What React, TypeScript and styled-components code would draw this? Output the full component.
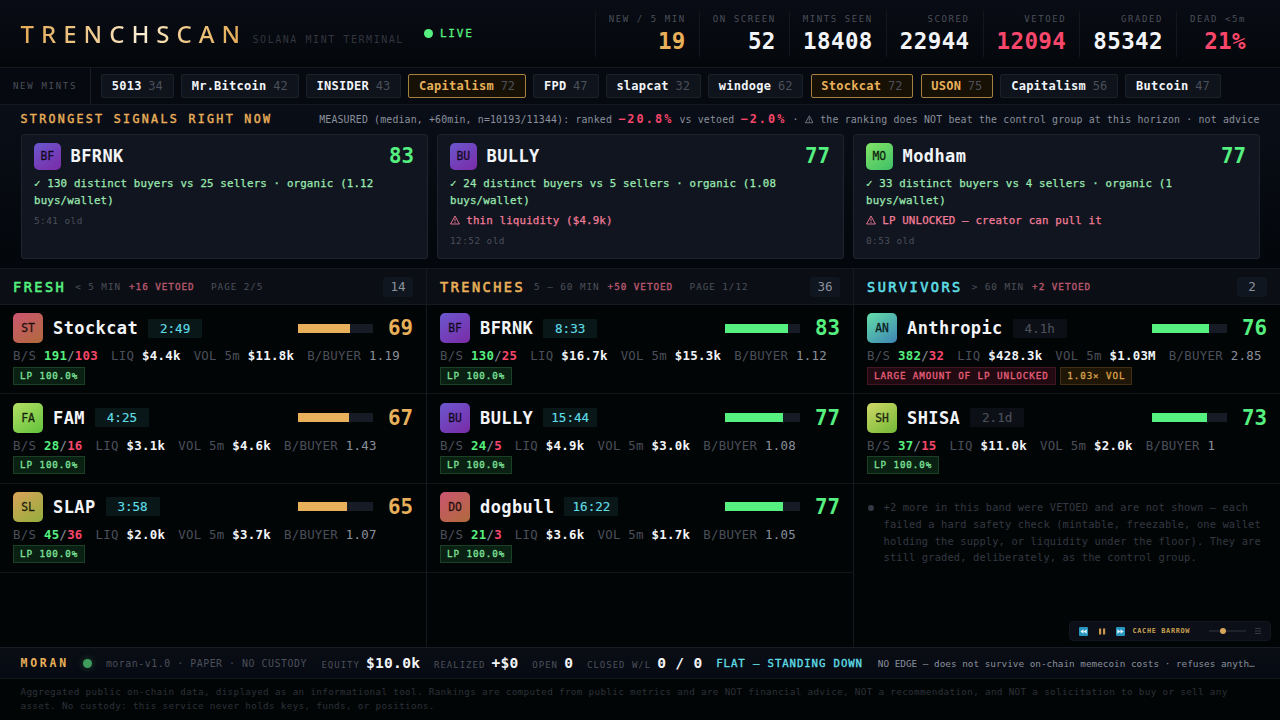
import React from 'react';
import styled, { createGlobalStyle } from 'styled-components';

const C = {
  amber: '#e8b05a',
  green: '#55f07f',
  red: '#f8476a',
  cyan: '#5fdde5',
  white: '#f2f4f8',
  grey: '#8a909c',
  dim: '#4b4f5a',
  faint: '#343842',
  line: '#15191f',
};

const Global = createGlobalStyle`
  * { box-sizing: border-box; }
  html, body { margin: 0; background: #020506; }
  body { overflow: hidden; font-family: "DejaVu Sans Mono", "Liberation Mono", monospace; color: ${C.white}; }
`;

const Screen = styled.div`
  width: 1280px;
  height: 720px;
  display: grid;
  grid-template-rows: 68px 37px 164px 378px 32px 41px;
  overflow: hidden;
  white-space: nowrap;
`;

/* ---------- header ---------- */

const Header = styled.header`
  display: flex;
  align-items: center;
  padding: 0 21px 0 20px;
  background: linear-gradient(180deg, #090c15, #04070a);
  border-bottom: 1px solid ${C.line};
`;

const Logo = styled.h1`
  margin: 0;
  padding-left: 0.5px;
  width: 232.5px;
  font: 500 24px/34px "Noto Sans", sans-serif;
  letter-spacing: 7px;
  background: linear-gradient(90deg, #e5ac57 0%, #f0cf97 35%, #fdf1d8 52%, #f0cb8b 70%, #e5ac57 95%);
  -webkit-background-clip: text;
  background-clip: text;
  color: transparent;
`;

const Tagline = styled.span`
  padding-top: 13px;
  font-size: 10px;
  line-height: 14px;
  letter-spacing: 1.55px;
  color: #32353f;
`;

const Live = styled.div`
  display: flex;
  align-items: center;
  gap: 7px;
  margin-left: 20px;
  font-size: 11px;
  line-height: 16px;
  letter-spacing: 1.8px;
  color: ${C.green};
  -webkit-text-stroke: 0.3px currentColor;
`;

const LiveDot = styled.i`
  width: 9px;
  height: 9px;
  border-radius: 50%;
  background: ${C.green};
`;

const Stats = styled.div`
  display: flex;
  margin-left: auto;
`;

const Stat = styled.div`
  height: 46px;
  padding: 0 13px;
  border-left: 1px solid #14171d;
  text-align: right;
`;

const StatLabel = styled.div`
  font-size: 9px;
  line-height: 17px;
  letter-spacing: 1.58px;
  color: ${C.dim};
`;

const StatValue = styled.div<{ $color: string }>`
  font-size: 22.5px;
  letter-spacing: 0.4px;
  line-height: 26px;
  font-weight: 700;
  color: ${p => p.$color};
`;

/* ---------- new mints ---------- */

const MintBar = styled.section`
  display: flex;
  align-items: stretch;
  background: #06090f;
  border-bottom: 1px solid ${C.line};
`;

const MintLabel = styled.div`
  width: 91px;
  padding-left: 13px;
  border-right: 1px solid #1a1d25;
  font-size: 9px;
  line-height: 37px;
  letter-spacing: 1.7px;
  color: ${C.dim};
`;

const Chips = styled.div`
  display: flex;
  align-items: center;
  gap: 7.15px;
  padding-left: 10px;
`;

const Chip = styled.div<{ $hot?: boolean }>`
  display: flex;
  align-items: center;
  gap: 6.7px;
  height: 24px;
  padding: 0 10px 0 9.7px;
  border: 1px solid ${p => (p.$hot ? '#a5813f' : '#1b212b')};
  border-radius: 2px;
  background: ${p => (p.$hot ? '#171105' : '#0e131c')};
  font-size: 12px;
  color: ${C.dim};
  b { letter-spacing: 0.27px; color: ${p => (p.$hot ? C.amber : C.white)}; }
`;

/* ---------- strongest signals ---------- */

const Signals = styled.section`
  padding: 0 20.5px 10px;
  background: linear-gradient(180deg, #0a0e18, #03060a);
  border-bottom: 1px solid ${C.line};
`;

const SignalsHead = styled.div`
  display: flex;
  justify-content: space-between;
  height: 28.5px;
  line-height: 28px;
`;

const SignalsTitle = styled.h2`
  margin: 0;
  font-size: 11.7px;
  line-height: 28px;
  letter-spacing: 2.29px;
  font-weight: 400;
  color: ${C.amber};
  -webkit-text-stroke: 0.4px currentColor;
`;

const Measured = styled.div`
  font-size: 9.9px;
  letter-spacing: 0.155px;
  color: ${C.grey};
  b {
    font-size: 11.8px;
    letter-spacing: 2.1px;
    color: ${C.red};
  }
`;

const CardGrid = styled.div`
  display: grid;
  grid-template-columns: repeat(3, 1fr);
  gap: 9px;
  height: 125px;
`;

const Card = styled.article`
  padding: 8.5px 12.5px;
  border: 1px solid #1e232e;
  border-radius: 3px;
  background: #111520;
`;

const TopLine = styled.div`
  display: flex;
  align-items: center;
`;

const Avatar = styled.div<{ $size: number; $from: string; $to: string }>`
  width: ${p => p.$size}px;
  height: ${p => p.$size}px;
  margin-right: 10px;
  border-radius: 5px;
  background: linear-gradient(145deg, ${p => p.$from}, ${p => p.$to});
  color: rgba(0, 0, 0, 0.78);
  font-size: 11.4px;
  line-height: ${p => p.$size + 0.5}px;
  text-align: center;
  -webkit-text-stroke: 0.35px currentColor;
`;

const TokenName = styled.span`
  font-size: 17px;
  line-height: 26px;
  letter-spacing: 0.4px;
  font-weight: 700;
`;

const Score = styled.span<{ $color: string }>`
  min-width: 30px;
  margin-left: auto;
  font-size: 20.8px;
  line-height: 26px;
  font-weight: 700;
  text-align: right;
  color: ${p => p.$color};
`;

const Reason = styled.p<{ $bad?: boolean }>`
  margin: ${p => (p.$bad ? 3.5 : 6.8)}px 0 0;
  font-size: 10.8px;
  letter-spacing: 0.155px;
  line-height: 16.8px;
  white-space: normal;
  color: ${p => (p.$bad ? '#f27d98' : '#9be8b0')};
  -webkit-text-stroke: 0.25px currentColor;
`;

const Mark = styled.span<{ $w: number }>`
  display: inline-block;
  width: ${p => p.$w}px;
  vertical-align: -1px;
  svg { display: block; }
`;

const Age = styled.div`
  margin-top: 3px;
  font-size: 9.3px;
  line-height: 15px;
  letter-spacing: 0.5px;
  color: ${C.dim};
`;

/* ---------- columns ---------- */

const Columns = styled.main`
  display: grid;
  grid-template-columns: repeat(3, 426px);
  gap: 1px;
  background: ${C.line};
`;

const Column = styled.section`
  background: #020506;
`;

const ColumnHead = styled.div`
  display: flex;
  align-items: center;
  height: 36px;
  padding: 0 13px;
  background: #0b0f15;
  border-bottom: 1px solid #161b21;
  font-size: 9.3px;
  letter-spacing: 0.95px;
  color: ${C.dim};
`;

const ColumnTitle = styled.h3<{ $color: string }>`
  margin: 0 9px 0 0;
  font-size: 13.6px;
  letter-spacing: 2.45px;
  font-weight: 400;
  color: ${p => p.$color};
  -webkit-text-stroke: 0.6px currentColor;
`;

const Vetoed = styled.span`
  margin: 0 16.5px 0 8px;
  color: #b9586f;
  -webkit-text-stroke: 0.35px currentColor;
`;

const Count = styled.span`
  width: 30px;
  height: 20px;
  margin-left: auto;
  border-radius: 3px;
  background: #10161f;
  font-size: 12.6px;
  line-height: 20px;
  letter-spacing: 0;
  text-align: center;
  color: ${C.grey};
`;

const Row = styled.article`
  height: 89.3px;
  padding: 8.4px 13px 0;
  border-bottom: 1px solid #11161a;
`;

const Timer = styled.span<{ $old?: boolean }>`
  width: 54px;
  height: 19px;
  margin-left: 10px;
  border-radius: 1px;
  background: ${p => (p.$old ? '#0c0f15' : '#0a1719')};
  font-size: 12.6px;
  line-height: 19px;
  text-align: center;
  color: ${p => (p.$old ? C.dim : C.cyan)};
  -webkit-text-stroke: 0.15px currentColor;
`;

const Meter = styled.div`
  width: 75px;
  height: 9px;
  margin-left: auto;
  margin-right: 9.6px;
  background: #171b26;
  & + span { margin-left: 0; }
`;

const MeterFill = styled.div<{ $color: string }>`
  height: 100%;
  background: ${p => p.$color};
`;

const Facts = styled.div`
  display: flex;
  gap: 13px;
  margin-top: 4px;
  font-size: 12.4px;
  letter-spacing: 0.27px;
  line-height: 17px;
  color: ${C.dim};
  b { color: ${C.white}; }
  em { font-style: normal; color: ${C.grey}; }
`;

const Buys = styled.b`&& { color: ${C.green}; }`;
const Sells = styled.b`&& { color: ${C.red}; }`;

const Tags = styled.div`
  display: flex;
  gap: 4.5px;
  margin-top: 2.5px;
`;

const tones = {
  good: ['#0a2013', '#1a4026', '#7fe39a'],
  bad: ['#220a12', '#431622', '#e8607b'],
  warn: ['#1f1605', '#40300f', '#dca14b'],
};

const Tag = styled.span<{ $tone: keyof typeof tones }>`
  height: 18px;
  padding: 0 6px;
  border: 1px solid ${p => tones[p.$tone][1]};
  background: ${p => tones[p.$tone][0]};
  color: ${p => tones[p.$tone][2]};
  font-size: 9.2px;
  line-height: 16px;
  letter-spacing: 0.94px;
  -webkit-text-stroke: 0.3px currentColor;
`;

const VetoNote = styled.div`
  display: flex;
  padding: 15.5px 0 0 14px;
  font-size: 10.4px;
  letter-spacing: 0.14px;
  line-height: 16.7px;
  color: ${C.faint};
  white-space: normal;
  p { margin: 0; }
`;

const NoteDot = styled.i`
  flex: none;
  width: 6px;
  height: 6px;
  margin: 6px 9.5px 0 0;
  border-radius: 50%;
  background: ${C.faint};
`;

/* ---------- player ---------- */

const Player = styled.aside`
  position: absolute;
  left: 1069px;
  top: 621px;
  display: flex;
  align-items: center;
  width: 202px;
  height: 20px;
  padding: 0 8px 0 9px;
  border: 1px solid #12161e;
  border-radius: 4px;
  background: #0c0f18;
  color: #c9a052;
`;

const TrackName = styled.b`
  width: 76px;
  margin-left: -2px;
  font-size: 6.9px;
  letter-spacing: 0.65px;
`;

const PlayerIcon = styled.svg`
  display: block;
  margin-right: 9.5px;
`;

/* ---------- footer ---------- */

const Footer = styled.footer`
  display: flex;
  align-items: center;
  padding: 0 20px 0 20.5px;
  background: linear-gradient(180deg, #0a0d13, #060a14);
  border-top: 1px solid #191d25;
  border-bottom: 1px solid #14181d;
`;

const Moran = styled.b`
  font-size: 11.5px;
  letter-spacing: 2.75px;
  color: ${C.amber};
`;

const Pulse = styled.i`
  width: 9px;
  height: 9px;
  margin: 0 14px 0 14px;
  border-radius: 50%;
  background: #3f9c5c;
  box-shadow: 0 0 7px rgba(63, 156, 92, 0.45);
`;

const Version = styled.span`
  width: 215.5px;
  font-size: 9.9px;
  letter-spacing: 0.54px;
  color: ${C.dim};
`;

const Figure = styled.span`
  display: flex;
  align-items: baseline;
  gap: 6.1px;
  margin-right: 13.8px;
  font-size: 9px;
  letter-spacing: 1px;
  color: ${C.dim};
  b {
    font-size: 14.6px;
    line-height: 20px;
    letter-spacing: 0.25px;
    color: ${C.white};
  }
`;

const Stance = styled.span`
  width: 161.5px;
  font-size: 10.7px;
  letter-spacing: 0.9px;
  color: ${C.cyan};
  -webkit-text-stroke: 0.35px currentColor;
`;

const Edge = styled.span`
  font-size: 9.35px;
  color: ${C.grey};
`;

const Disclaimer = styled.p`
  margin: 0;
  padding: 5.5px 20.5px 0;
  font-size: 9.3px;
  letter-spacing: 0.32px;
  line-height: 14.6px;
  color: #2c3138;
  white-space: normal;
`;

/* ---------- data ---------- */

const stats: [string, string, string][] = [
  ['NEW / 5 MIN', '19', C.amber],
  ['ON SCREEN', '52', C.white],
  ['MINTS SEEN', '18408', C.white],
  ['SCORED', '22944', C.white],
  ['VETOED', '12094', C.red],
  ['GRADED', '85342', C.white],
  ['DEAD <5m', '21%', C.red],
];

const mints: [string, number, boolean?][] = [
  ['5013', 34], ['Mr.Bitcoin', 42], ['INSIDER', 43], ['Capitalism', 72, true],
  ['FPD', 47], ['slapcat', 32], ['windoge', 62], ['Stockcat', 72, true],
  ['USON', 75, true], ['Capitalism', 56], ['Butcoin', 47],
];

const hues: Record<string, [string, string]> = {
  BF: ['#6b57cf', '#7a2ba6'],
  BU: ['#6b57cf', '#7a2ba6'],
  MO: ['#82e566', '#3fbf68'],
  ST: ['#cc5570', '#b06a3c'],
  FA: ['#b4df64', '#62c23c'],
  SL: ['#d9a35a', '#94ae3c'],
  DO: ['#cc5570', '#b06a3c'],
  AN: ['#63dfa8', '#3d84b4'],
  SH: ['#d0d868', '#73b935'],
};

type Signal = { name: string; score: number; good: string; bad?: string; age: string };

const signals: Signal[] = [
  { name: 'BFRNK', score: 83, good: '130 distinct buyers vs 25 sellers · organic (1.12 buys/wallet)', age: '5:41' },
  { name: 'BULLY', score: 77, good: '24 distinct buyers vs 5 sellers · organic (1.08 buys/wallet)', bad: 'thin liquidity ($4.9k)', age: '12:52' },
  { name: 'Modham', score: 77, good: '33 distinct buyers vs 4 sellers · organic (1 buys/wallet)', bad: 'LP UNLOCKED — creator can pull it', age: '0:53' },
];

type Token = {
  name: string; age: string; old?: boolean; score: number; buys: number; sells: number;
  liq: string; vol: string; per: string; tags?: [keyof typeof tones, string][];
};

type Band = { title: string; color: string; range: string; vetoed: number; page?: string; count: number; rows: Token[] };

const bands: Band[] = [
  {
    title: 'FRESH', color: C.green, range: '< 5 MIN', vetoed: 16, page: 'PAGE 2/5', count: 14,
    rows: [
      { name: 'Stockcat', age: '2:49', score: 69, buys: 191, sells: 103, liq: '$4.4k', vol: '$11.8k', per: '1.19' },
      { name: 'FAM', age: '4:25', score: 67, buys: 28, sells: 16, liq: '$3.1k', vol: '$4.6k', per: '1.43' },
      { name: 'SLAP', age: '3:58', score: 65, buys: 45, sells: 36, liq: '$2.0k', vol: '$3.7k', per: '1.07' },
    ],
  },
  {
    title: 'TRENCHES', color: C.amber, range: '5 — 60 MIN', vetoed: 50, page: 'PAGE 1/12', count: 36,
    rows: [
      { name: 'BFRNK', age: '8:33', score: 83, buys: 130, sells: 25, liq: '$16.7k', vol: '$15.3k', per: '1.12' },
      { name: 'BULLY', age: '15:44', score: 77, buys: 24, sells: 5, liq: '$4.9k', vol: '$3.0k', per: '1.08' },
      { name: 'dogbull', age: '16:22', score: 77, buys: 21, sells: 3, liq: '$3.6k', vol: '$1.7k', per: '1.05' },
    ],
  },
  {
    title: 'SURVIVORS', color: C.cyan, range: '> 60 MIN', vetoed: 2, count: 2,
    rows: [
      {
        name: 'Anthropic', age: '4.1h', old: true, score: 76, buys: 382, sells: 32, liq: '$428.3k', vol: '$1.03M', per: '2.85',
        tags: [['bad', 'LARGE AMOUNT OF LP UNLOCKED'], ['warn', '1.03× VOL']],
      },
      { name: 'SHISA', age: '2.1d', old: true, score: 73, buys: 37, sells: 15, liq: '$11.0k', vol: '$2.0k', per: '1' },
    ],
  },
];

const figures: [string, string][] = [
  ['EQUITY', '$10.0k'], ['REALIZED', '+$0'], ['OPEN', '0'], ['CLOSED W/L', '0 / 0'],
];

/* ---------- pieces ---------- */

function TokenAvatar({ name, size }: { name: string; size: number }) {
  const initials = name.slice(0, 2).toUpperCase();
  const [from, to] = hues[initials];
  return <Avatar $size={size} $from={from} $to={to}>{initials}</Avatar>;
}

function Warning({ size }: { size: number }) {
  return (
    <svg width={size} height={size} viewBox="0 0 10 10" fill="none" stroke="currentColor" strokeWidth="0.9" strokeLinejoin="round">
      <path d="M5 1 L9.4 9 H0.6 Z" />
      <path d="M5 3.6 V6.4 M5 7.1 V8.1" />
    </svg>
  );
}

function Skip({ back }: { back?: boolean }) {
  return (
    <PlayerIcon width="9" height="9" viewBox="0 0 9 9">
      <rect width="9" height="9" rx="1" fill="#2795bd" />
      <path d={back ? 'M4.5 2.3 V6.7 L1.3 4.5 Z M7.7 2.3 V6.7 L4.5 4.5 Z' : 'M1.3 2.3 V6.7 L4.5 4.5 Z M4.5 2.3 V6.7 L7.7 4.5 Z'} fill="#e4f4fa" />
    </PlayerIcon>
  );
}

function TokenRow({ t }: { t: Token }) {
  const color = t.score >= 70 ? C.green : C.amber;
  const tags = t.tags ?? [['good', 'LP 100.0%'] as [keyof typeof tones, string]];
  return (
    <Row>
      <TopLine>
        <TokenAvatar name={t.name} size={30} />
        <TokenName>{t.name}</TokenName>
        <Timer $old={t.old}>{t.age}</Timer>
        <Meter><MeterFill $color={color} style={{ width: `${t.score}%` }} /></Meter>
        <Score $color={color}>{t.score}</Score>
      </TopLine>
      <Facts>
        <span>B/S <Buys>{t.buys}</Buys><em>/</em><Sells>{t.sells}</Sells></span>
        <span>LIQ <b>{t.liq}</b></span>
        <span>VOL 5m <b>{t.vol}</b></span>
        <span>B/BUYER <em>{t.per}</em></span>
      </Facts>
      <Tags>
        {tags.map(([tone, text]) => <Tag key={text} $tone={tone}>{text}</Tag>)}
      </Tags>
    </Row>
  );
}

export default function App() {
  return (
    <>
      <Global />
      <Screen>
        <Header>
          <Logo>TRENCHSCAN</Logo>
          <Tagline>SOLANA MINT TERMINAL</Tagline>
          <Live><LiveDot />LIVE</Live>
          <Stats>
            {stats.map(([label, value, color]) => (
              <Stat key={label}>
                <StatLabel>{label}</StatLabel>
                <StatValue $color={color}>{value}</StatValue>
              </Stat>
            ))}
          </Stats>
        </Header>

        <MintBar>
          <MintLabel>NEW MINTS</MintLabel>
          <Chips>
            {mints.map(([name, score, hot], i) => (
              <Chip key={i} $hot={hot}><b>{name}</b><span>{score}</span></Chip>
            ))}
          </Chips>
        </MintBar>

        <Signals>
          <SignalsHead>
            <SignalsTitle>STRONGEST SIGNALS RIGHT NOW</SignalsTitle>
            <Measured>
              MEASURED (median, +60min, n=10193/11344): ranked <b>−20.8%</b> vs vetoed <b>−2.0%</b> · <Mark $w={9.4}><Warning size={8.6} /></Mark> the ranking does NOT beat the control group at this horizon · not advice
            </Measured>
          </SignalsHead>
          <CardGrid>
            {signals.map(s => (
              <Card key={s.name}>
                <TopLine>
                  <TokenAvatar name={s.name} size={26.5} />
                  <TokenName>{s.name}</TokenName>
                  <Score $color={C.green}>{s.score}</Score>
                </TopLine>
                <Reason>✓ {s.good}</Reason>
                {s.bad && <Reason $bad><Mark $w={9.6}><Warning size={10} /></Mark> {s.bad}</Reason>}
                <Age>{s.age} old</Age>
              </Card>
            ))}
          </CardGrid>
        </Signals>

        <Columns>
          {bands.map(b => (
            <Column key={b.title}>
              <ColumnHead>
                <ColumnTitle $color={b.color}>{b.title}</ColumnTitle>
                <span>{b.range}</span>
                <Vetoed>+{b.vetoed} VETOED</Vetoed>
                {b.page && <span>{b.page}</span>}
                <Count>{b.count}</Count>
              </ColumnHead>
              {b.rows.map(t => <TokenRow key={t.name} t={t} />)}
              {b.title === 'SURVIVORS' && (
                <VetoNote>
                  <NoteDot />
                  <p>+2 more in this band were VETOED and are not shown — each failed a hard safety check (mintable, freezable, one wallet holding the supply, or liquidity under the floor). They are still graded, deliberately, as the control group.</p>
                </VetoNote>
              )}
            </Column>
          ))}
        </Columns>

        <Footer>
          <Moran>MORAN</Moran>
          <Pulse />
          <Version>moran-v1.0 · PAPER · NO CUSTODY</Version>
          {figures.map(([label, value]) => (
            <Figure key={label}>{label}<b>{value}</b></Figure>
          ))}
          <Stance>FLAT — STANDING DOWN</Stance>
          <Edge>NO EDGE — does not survive on-chain memecoin costs · refuses anyth…</Edge>
        </Footer>

        <Disclaimer>
          Aggregated public on-chain data, displayed as an informational tool. Rankings are computed from public metrics and are NOT financial advice, NOT a recommendation, and NOT a solicitation to buy or sell any asset. No custody: this service never holds keys, funds, or positions.
        </Disclaimer>
      </Screen>

      <Player>
        <Skip back />
        <PlayerIcon width="9" height="9" viewBox="0 0 9 9" fill="#c9964c">
          <rect x="1" y="1.5" width="2.2" height="6" />
          <rect x="5" y="1.5" width="2.2" height="6" />
        </PlayerIcon>
        <Skip />
        <TrackName>CACHE BARROW</TrackName>
        <svg width="52" height="8" viewBox="0 0 52 8">
          <path d="M0 4 H37" stroke="#252a33" strokeWidth="1.5" />
          <circle cx="14" cy="4" r="3" fill="#d6a65c" />
          <path d="M46 1.5 H52 M46 4 H52 M46 6.5 H52" stroke="#343842" strokeWidth="1" />
        </svg>
      </Player>
    </>
  );
}
